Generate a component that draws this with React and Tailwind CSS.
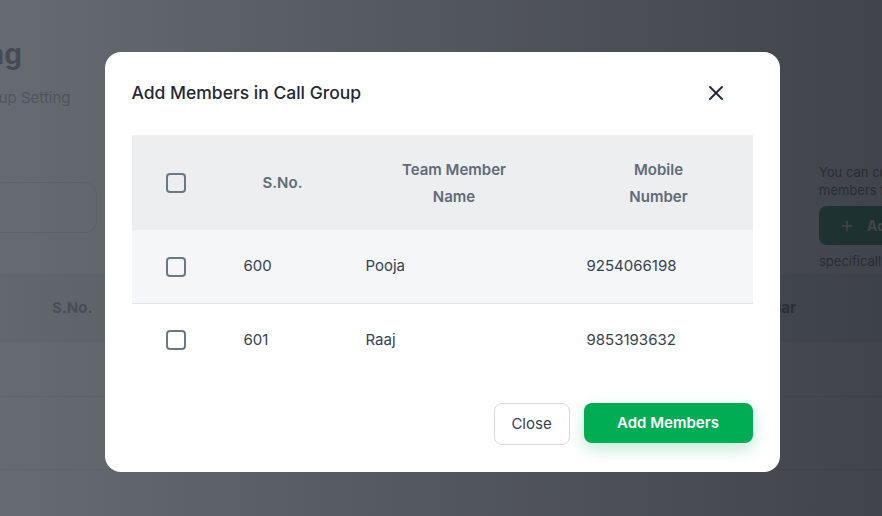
import React from 'react';
import { X, Plus } from 'lucide-react';

const members = [
  { sno: 600, name: 'Pooja', mobile: '9254066198' },
  { sno: 601, name: 'Raaj', mobile: '9853193632' },
];

const Checkbox = () => (
  <span className="block w-5 h-5 rounded-[4px] border-2 border-[#6b7785] bg-transparent" />
);

// page that sits behind the dialog overlay
const BackgroundPage = () => (
  <div className="h-[516px] w-[882px] overflow-hidden bg-white text-[#1f2937]">
    <h1 className="-ml-[166px] mt-[38px] whitespace-nowrap text-[28px] font-bold leading-8">Group Setting</h1>
    <p className="-ml-[129px] mt-[17px] whitespace-nowrap text-[15px] leading-[22px] text-[#6b7280]">Settings / Call Group Setting</p>
    <div className="mt-[54px] flex items-start">
      <div className="-ml-[110px] mt-[19px] h-[51px] w-[207px] rounded-xl border border-[#d1d5db]" />
      <div className="ml-auto w-[63px] overflow-visible whitespace-nowrap text-[13px] leading-[18px] text-[#4b5563]">
        <p>You can configure call group<br />members from the list below</p>
        <div className="mt-[7px] flex h-[39px] w-[150px] items-center gap-[12px] rounded-lg bg-[#0b7a45] pl-[20px] text-[14px] font-bold text-white">
          <Plus size={16} /> Add Members
        </div>
        <p className="mt-[7px]">specifically for this group</p>
      </div>
    </div>
    <div className="mt-[4px] flex h-[68px] items-center justify-between bg-[#e8eaed] pl-[52px] pr-[86px] text-[15px] font-bold text-[#4b5563]">
      <span>S.No.</span>
      <span>Calendar</span>
    </div>
    <div className="h-[55px] border-b border-[#e5e7eb]" />
    <div className="h-[73px] border-b border-[#e5e7eb]" />
  </div>
);

export default function App() {
  return (
    <div className="relative h-[516px] w-[882px] overflow-hidden" style={{ fontFamily: 'Inter, "Noto Sans", sans-serif' }}>
      <BackgroundPage />
      <div className="absolute inset-0 flex items-start justify-center bg-gradient-to-r from-[#4b5058]/85 to-[#1f232b]/85">
        <div className="mt-[52px] ml-[2px] w-[675px] rounded-2xl bg-white px-[27px] pt-[28px] pb-[27px]">
          <div className="flex items-center justify-between pr-[25px]">
            <h2 className="text-[17.5px] font-medium text-[#1f2937]">Add Members in Call Group</h2>
            <X size={24} strokeWidth={2} className="text-[#1f2937]" />
          </div>
          <table className="mt-[29px] w-full border-collapse text-[15px]">
            <thead>
              <tr className="h-[95px] bg-[#eceef0] text-[#5f6b78]">
                <th className="w-[90px] pl-[34px] text-left"><Checkbox /></th>
                <th className="w-[122px] font-semibold">S.No.</th>
                <th className="w-[221px] font-semibold leading-[27px]">Team Member<br />Name</th>
                <th className="font-semibold leading-[27px]">Mobile<br />Number</th>
              </tr>
            </thead>
            <tbody className="text-[#374151]">
              {members.map((m, i) => (
                <tr key={m.sno} className={`h-[73px] ${i === 0 ? 'bg-[#f5f6f8] border-b border-[#dfe2e6]' : 'bg-white'}`}>
                  <td className="pl-[34px]"><Checkbox /></td>
                  <td className="pl-[22px]">{m.sno}</td>
                  <td className="pl-[22px]">{m.name}</td>
                  <td className="pl-[22px]">{m.mobile}</td>
                </tr>
              ))}
            </tbody>
          </table>
          <div className="mt-[27px] flex justify-end gap-[14px]">
            <button className="h-[42px] w-[76px] rounded-lg border border-[#d7dadf] bg-white text-[15px] text-[#374151]">Close</button>
            <button className="h-[40px] w-[169px] rounded-lg bg-[#00ad55] text-[15px] font-semibold text-white shadow-[0_6px_16px_rgba(0,173,85,0.25)]">Add Members</button>
          </div>
        </div>
      </div>
    </div>
  );
}
